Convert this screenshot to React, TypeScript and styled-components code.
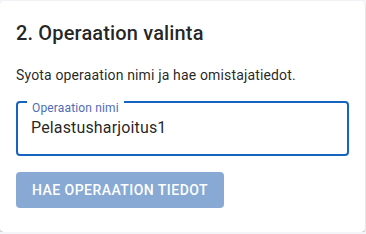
import styled, { createGlobalStyle } from "styled-components";

const GlobalStyle = createGlobalStyle`
  body {
    margin: 0;
    background: #f3f5f8;
    font-family: Roboto, "Liberation Sans", sans-serif;
  }
`;

const Card = styled.section`
  box-sizing: border-box;
  width: 365px;
  height: 231px;
  margin-top: 1px;
  padding: 16px 16px 24px;
  background: #ffffff;
  border-radius: 4px;
  box-shadow: 0px 2px 1px -1px rgba(0, 0, 0, 0.2),
    0px 1px 1px 0px rgba(0, 0, 0, 0.14), 0px 1px 3px 0px rgba(0, 0, 0, 0.12);
  display: flex;
  flex-direction: column;
  align-items: flex-start;
`;

const Title = styled.h2`
  margin: 0;
  font-size: 20px;
  font-weight: 500;
  line-height: 32px;
  letter-spacing: 0.15px;
  color: rgba(0, 0, 0, 0.87);
`;

const Hint = styled.p`
  margin: 16px 0 0;
  font-size: 14px;
  line-height: 20px;
  letter-spacing: 0.15px;
  color: rgba(0, 0, 0, 0.87);
`;

const Field = styled.label`
  position: relative;
  box-sizing: border-box;
  display: flex;
  align-items: center;
  width: 100%;
  height: 56px;
  margin-top: 16px;
  padding: 0 14px;
  border: 2px solid #1565c0;
  border-radius: 4px;
`;

const FieldLabel = styled.span`
  position: absolute;
  left: 9px;
  top: -3px;
  padding: 0 5px;
  background: #ffffff;
  font-size: 12px;
  line-height: 16px;
  letter-spacing: 0.15px;
  color: #4f6db3;
`;

const Input = styled.input`
  border: 0;
  outline: none;
  padding: 0;
  margin: -3px 0 0 -1px;
  width: 100%;
  font-family: Roboto, "Liberation Sans", sans-serif;
  font-size: 16px;
  letter-spacing: 0.15px;
  color: rgba(0, 0, 0, 0.87);
  background: transparent;
`;

const Button = styled.button`
  margin-top: 16px;
  height: 36px;
  padding: 0 16px;
  border: 0;
  border-radius: 4px;
  background: #87a9d4;
  color: #ffffff;
  font-family: Roboto, "Liberation Sans", sans-serif;
  font-size: 14px;
  font-weight: 500;
  letter-spacing: 0.46px;
  text-transform: uppercase;
`;

export default function App() {
  return (
    <>
      <GlobalStyle />
      <Card>
        <Title>2. Operaation valinta</Title>
        <Hint>Syota operaation nimi ja hae omistajatiedot.</Hint>
        <Field>
          <FieldLabel>Operaation nimi</FieldLabel>
          <Input defaultValue="Pelastusharjoitus1" />
        </Field>
        <Button disabled>Hae operaation tiedot</Button>
      </Card>
    </>
  );
}
